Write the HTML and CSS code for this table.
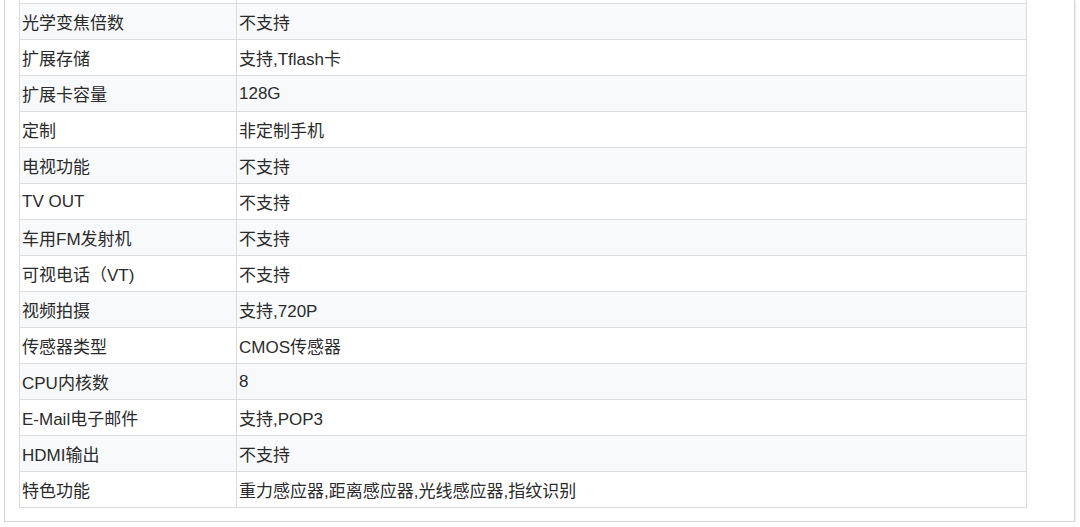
FILE: index.html
```html
<!DOCTYPE html>
<html lang="zh-CN">
<head>
<meta charset="utf-8">
<title>参数</title>
<link rel="stylesheet" href="styles.css">
</head>
<body>
<div class="frame">
  <table class="spec">
    <colgroup><col class="c1"><col class="c2"></colgroup>
    <tbody>
      <tr class="odd"><td></td><td></td></tr>
      <tr class="even"><td>光学变焦倍数</td><td>不支持</td></tr>
      <tr class="odd"><td>扩展存储</td><td>支持,Tflash卡</td></tr>
      <tr class="even"><td>扩展卡容量</td><td>128G</td></tr>
      <tr class="odd"><td>定制</td><td>非定制手机</td></tr>
      <tr class="even"><td>电视功能</td><td>不支持</td></tr>
      <tr class="odd"><td>TV OUT</td><td>不支持</td></tr>
      <tr class="even"><td>车用FM发射机</td><td>不支持</td></tr>
      <tr class="odd"><td>可视电话（VT)</td><td>不支持</td></tr>
      <tr class="even"><td>视频拍摄</td><td>支持,720P</td></tr>
      <tr class="odd"><td>传感器类型</td><td>CMOS传感器</td></tr>
      <tr class="even"><td>CPU内核数</td><td>8</td></tr>
      <tr class="odd"><td>E-Mail电子邮件</td><td>支持,POP3</td></tr>
      <tr class="even"><td>HDMI输出</td><td>不支持</td></tr>
      <tr class="odd"><td>特色功能</td><td>重力感应器,距离感应器,光线感应器,指纹识别</td></tr>
    </tbody>
  </table>
</div>
</body>
</html>
```

FILE: styles.css
```css
html, body {
  margin: 0;
  padding: 0;
  background: #ffffff;
}

body {
  font-family: "Liberation Sans", "Noto Sans CJK SC", sans-serif;
  color: #2b2b2b;
}

.frame {
  margin: 0 5px 0 4px;
  border: 1px solid #d6d6d6;
  border-top: none;
  padding: 0 47px 13px 14px;
  overflow: hidden;
  box-shadow: 1px 1px 1px rgba(0, 0, 0, 0.06);
}

.spec {
  width: 1008px;
  margin-top: -33px;
  border-collapse: collapse;
  table-layout: fixed;
  border: 1px solid #dcdcdc;
  font-size: 17px;
}

.c1 { width: 217px; }

.spec td {
  border: 1px solid #dcdcdc;
  height: 35px;
  padding: 0 2px;
  vertical-align: middle;
  white-space: nowrap;
}

.spec tr.even td {
  background: #f8f9fb;
}

.spec tr.odd td {
  background: #ffffff;
}
```
